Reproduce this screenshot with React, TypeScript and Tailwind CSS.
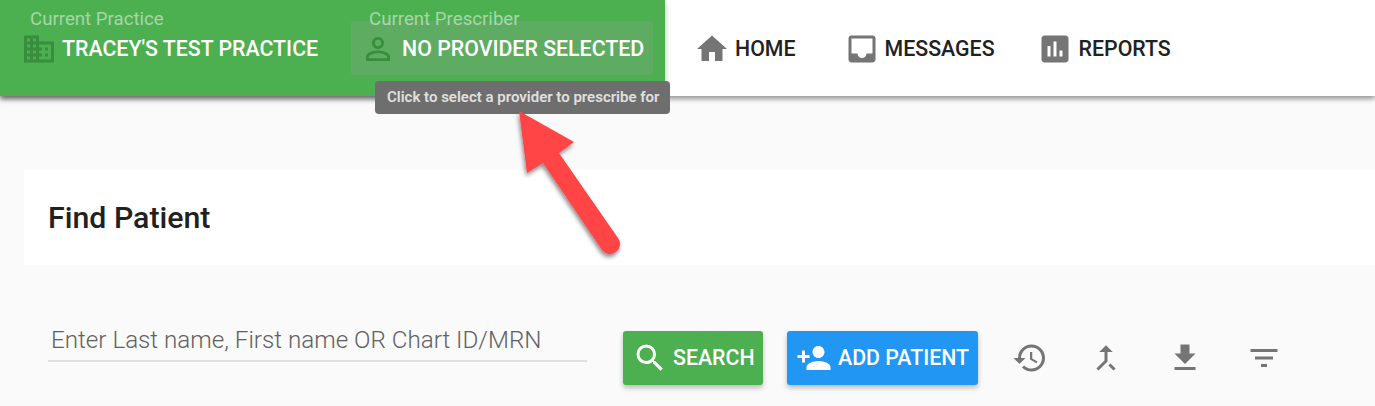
import React from "react";
import { MdDomain, MdPersonOutline, MdHome, MdInbox, MdAssessment, MdSearch, MdPersonAdd, MdHistory, MdCallMerge, MdFileDownload, MdFilterList } from "react-icons/md";

function NavItem({ icon, label, className }: { icon: React.ReactNode; label: string; className: string }) {
  return (
    <div className={`flex items-center ${className}`}>
      {icon}
      <span className="text-[21.33px] font-medium text-[#212121] leading-none">{label}</span>
    </div>
  );
}

export default function App() {
  return (
    <div className="relative w-[1375px] h-[406px] overflow-hidden bg-[#fafafa] font-['Roboto',sans-serif]">
      <header className="relative flex h-[96px] bg-white shadow-[0_3px_5px_rgba(0,0,0,0.4)]">
        <div className="flex w-[665px] bg-[#4caf50] shadow-[0_3px_5px_rgba(0,0,0,0.3)]">
          <div className="w-[351px] pl-[21px]">
            <div className="pl-[9px] pt-[9px] text-[18.67px] leading-[20px] text-white/50 whitespace-nowrap">Current Practice</div>
            <div className="flex items-center h-[42px] mt-[-1px]">
              <MdDomain className="w-[36px] h-[36px] text-[#388e3c] mr-[5px] shrink-0" />
              <span className="text-[21.33px] font-medium text-white whitespace-nowrap">TRACEY'S TEST PRACTICE</span>
            </div>
          </div>
          <div className="relative w-[302px] h-[54px] mt-[21px] pt-[2px] bg-[#5eac62] rounded-[2px] flex items-center pl-[9px]">
            <MdPersonOutline className="w-[36px] h-[36px] text-[#388e3c] mr-[6px] shrink-0" />
            <span className="text-[21.33px] font-medium text-white whitespace-nowrap">NO PROVIDER SELECTED</span>
            <div className="absolute left-[18px] top-[-12px] text-[18.67px] leading-[20px] text-white/50 whitespace-nowrap">Current Prescriber</div>
          </div>
        </div>
        <nav className="flex items-center pt-[1px]">
          <NavItem className="ml-[29px] mr-[48px]" label="HOME" icon={<MdHome className="w-[36px] h-[36px] text-[#757575] mr-[5px] shrink-0" />} />
          <NavItem className="mr-[42px]" label="MESSAGES" icon={<MdInbox className="w-[36px] h-[36px] text-[#757575] mr-[5px] shrink-0" />} />
          <NavItem label="REPORTS" icon={<MdAssessment className="w-[36px] h-[36px] text-[#757575] mr-[6px] shrink-0" />} />
        </nav>
      </header>

      <main className="pl-[24px] pt-[74px]">
        <section className="h-[95px] bg-white pl-[24px] pt-[2px] flex items-center">
          <h1 className="text-[30.3px] font-medium text-[#212121] leading-none">Find Patient</h1>
        </section>
        <div className="flex mt-[66px] pl-[24px]">
          <div className="w-[539px] h-[31px] border-b-2 border-[#e0e0e0] pl-[3px] text-[24.2px] leading-[19px] font-light text-[#616161] whitespace-nowrap">
            Enter Last name, First name OR Chart ID/MRN
          </div>
          <button className="ml-[36px] w-[140px] h-[54px] rounded-[3px] bg-[#4caf50] flex items-center pl-[9px] text-white text-[21.33px] font-medium shadow-[0_3px_5px_rgba(0,0,0,0.25)]">
            <MdSearch className="w-[36px] h-[36px] mr-[5px] shrink-0" />
            SEARCH
          </button>
          <button className="ml-[24px] w-[191px] h-[54px] rounded-[3px] bg-[#2196f3] flex items-center pl-[9px] text-white text-[21.33px] font-medium whitespace-nowrap shadow-[0_3px_5px_rgba(0,0,0,0.25)]">
            <MdPersonAdd className="w-[36px] h-[36px] mr-[6px] shrink-0" />
            ADD PATIENT
          </button>
          <div className="flex items-center text-[#757575]">
            <MdHistory className="ml-[34px] w-[36px] h-[36px]" />
            <MdCallMerge className="ml-[40px] w-[36px] h-[36px]" />
            <MdFileDownload className="ml-[43px] w-[36px] h-[36px]" />
            <MdFilterList className="ml-[43px] w-[36px] h-[36px]" />
          </div>
        </div>
      </main>

      <div className="absolute left-[375px] top-[81px] w-[295px] h-[33px] rounded-[4px] bg-[#6e6e6e] flex items-center pl-[12px] text-[15px] font-semibold text-[#e0e0e0] whitespace-nowrap">
        Click to select a provider to prescribe for
      </div>

      <svg className="absolute left-0 top-0 pointer-events-none" width="1375" height="406" viewBox="0 0 1375 406">
        <defs>
          <filter id="s" x="-20%" y="-20%" width="140%" height="140%">
            <feDropShadow dx="-1" dy="3" stdDeviation="2" floodColor="#000" floodOpacity="0.45" />
          </filter>
        </defs>
        <g filter="url(#s)">
          <path d="M519 111 L574 142 L559 153 L618 238 A10 10 0 0 1 602 250 L543 163 L527 173 Z" fill="#ff4444" />
        </g>
      </svg>
    </div>
  );
}
